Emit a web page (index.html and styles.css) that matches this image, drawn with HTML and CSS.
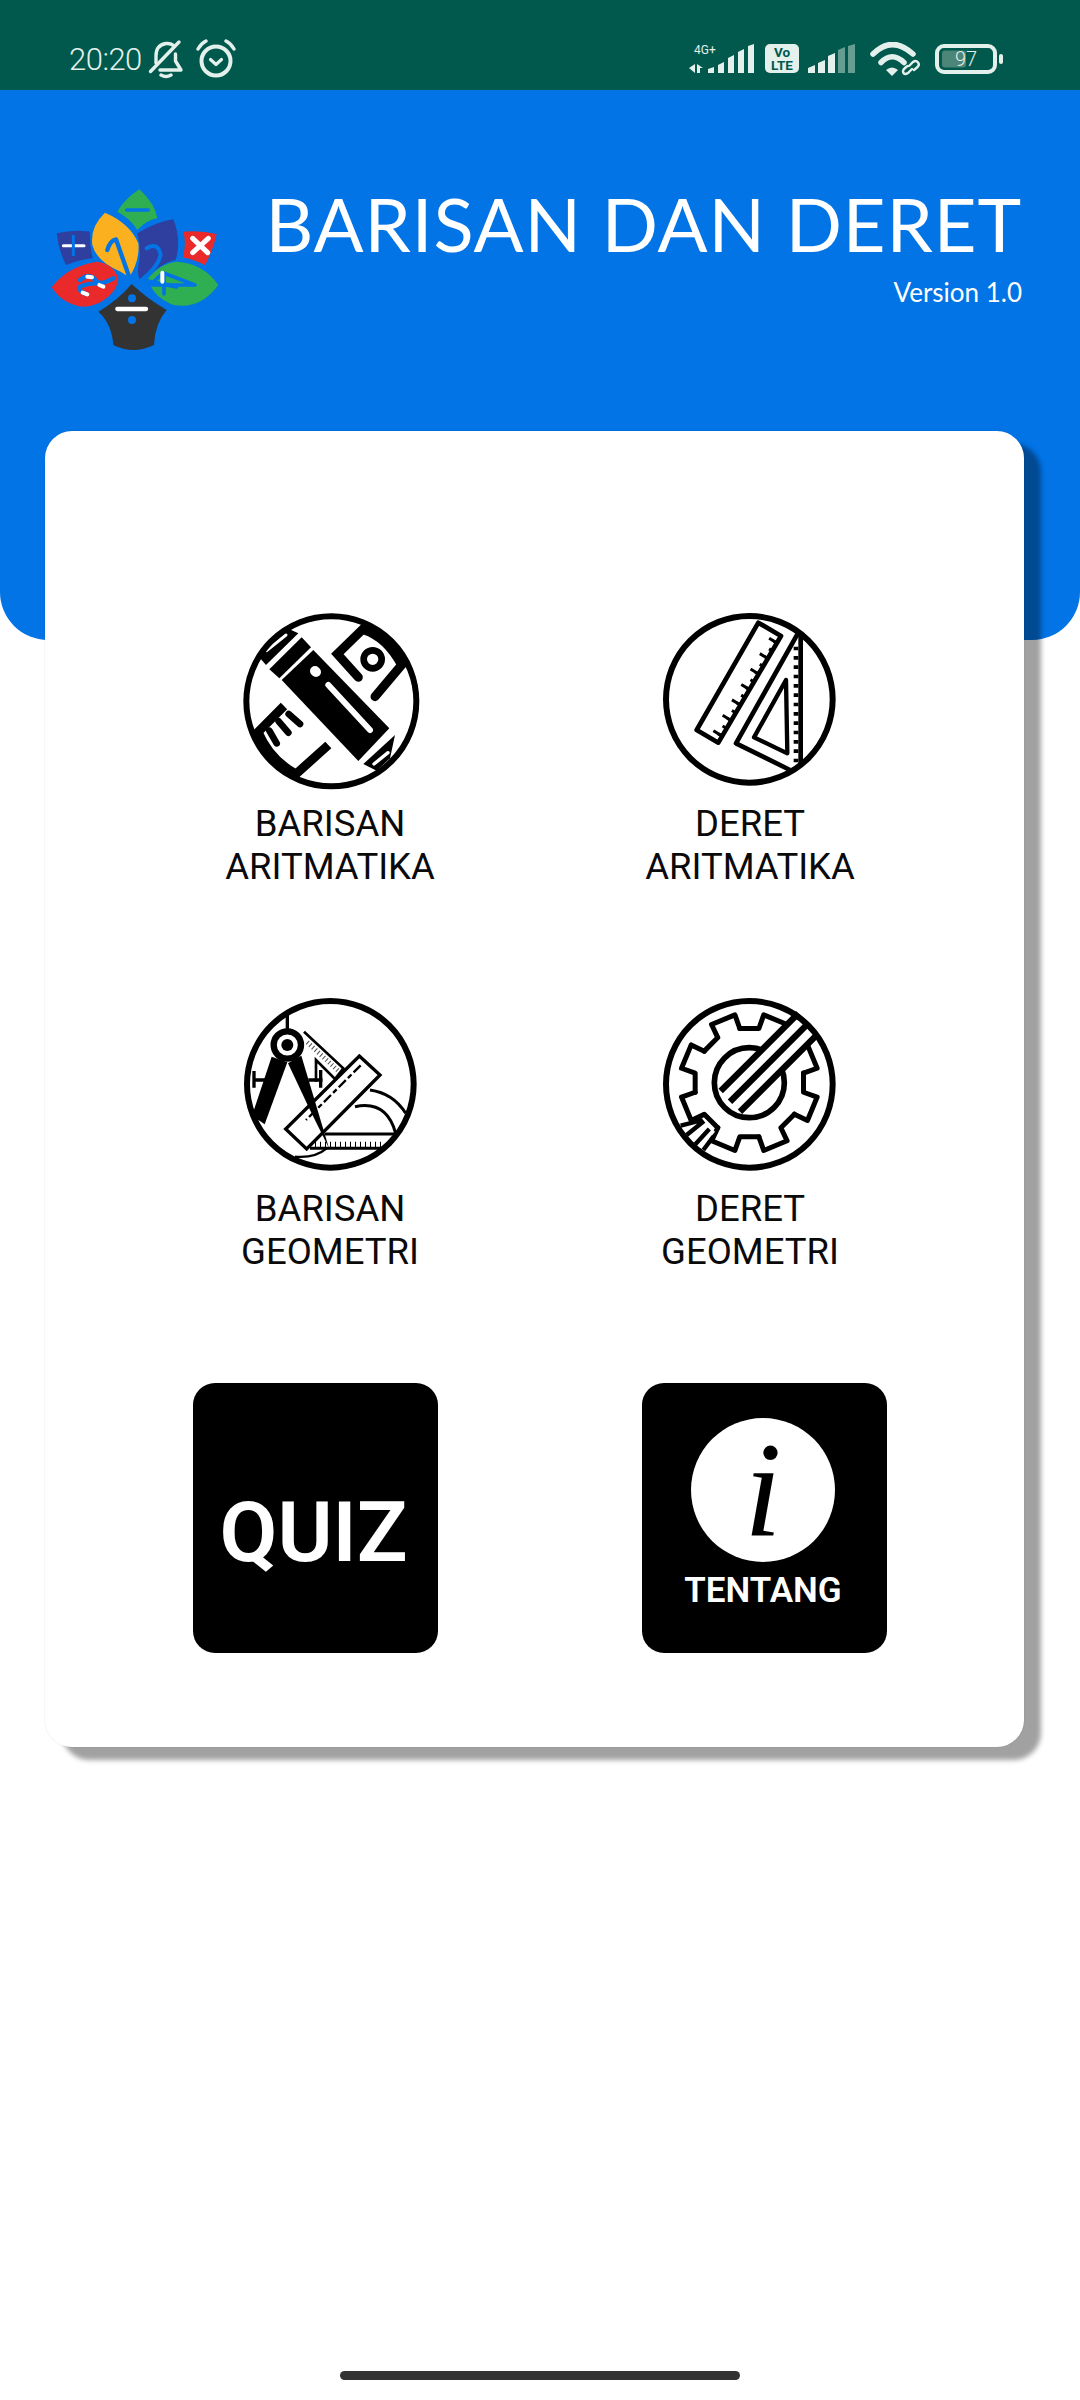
FILE: index.html
```html
<!DOCTYPE html>
<html lang="id">
<head>
<meta charset="utf-8">
<title>Barisan dan Deret</title>
<link rel="stylesheet" href="styles.css">
</head>
<body>
<div class="page">
  <div class="statusbar">
    <div class="status-left">
      <span class="time">20:20</span>
      <svg class="ic-bell" viewBox="0 0 36 40" fill="none" stroke="#e3f0ec" stroke-width="3.4" stroke-linecap="round" stroke-linejoin="round">
        <path d="M8 24V17Q8 6 18 4.500Q23 4 26 7"/><path d="M27.500 15V22L33 31H12"/><path d="M2.500 32.500L31 3"/><path d="M13 36Q18 39 23 36"/>
      </svg>
      <svg class="ic-alarm" viewBox="0 0 40 40" fill="none" stroke="#e3f0ec" stroke-linecap="round" stroke-linejoin="round">
        <circle cx="20" cy="22" r="14.500" stroke-width="4"/><path d="M14.500 20.500L20 25.500L25.500 20.500" stroke-width="3.200"/><path d="M2 10Q5 4.500 10 2M30 2Q35 4.500 38 10" stroke-width="3.400"/>
      </svg>
    </div>
    <div class="status-right">
      <svg class="ic-net" viewBox="0 0 67 34" fill="#e3f0ec">
        <text x="5" y="13" class="net-label">4G+</text>
        <path d="M0 27L6 23V32Z"/><path d="M8 23L14 27H11V32H8Z"/>
        <path d="M19 28L25 26V32H19Z"/><path d="M29 24L35 21V32H29Z"/><path d="M39 17L45 14V32H39Z"/><path d="M49 11L55 8V32H49Z"/><path d="M59 5L65 3V32H59Z"/>
      </svg>
      <svg class="ic-volte" viewBox="0 0 34 29">
        <rect width="34" height="29" rx="5" fill="#e3f0ec"/>
        <text x="17" y="13" class="volte-text">Vo</text>
        <text x="17" y="26" class="volte-text">LTE</text>
      </svg>
      <svg class="ic-signal" viewBox="0 0 48 30" fill="#e3f0ec">
        <path d="M0 24L7 21V29H0Z"/><path d="M10 19L17 16V29H10Z"/><path d="M20 12L27 9V29H20Z"/>
        <path d="M30 6L37 3V29H30Z" opacity=".45"/><path d="M40 2L47 0V29H40Z" opacity=".45"/>
      </svg>
      <svg class="ic-wifi" viewBox="0 0 50 34" fill="none" stroke="#e3f0ec" stroke-linecap="round">
        <path d="M3 12Q22 -7 43 12" stroke-width="5.500"/><path d="M11 20.500Q22 9 34 20.500" stroke-width="5.500"/>
        <path d="M16 28Q22 23 28 28L22 34Z" fill="#e3f0ec" stroke="none"/>
        <path d="M39 24L43 20Q46 18 48 20.500Q50 23 47 25.500L44 28M42 27L38 31Q35 33 33.500 31Q32 28.500 35 26L37.500 24" stroke-width="2.400"/>
      </svg>
      <svg class="ic-batt" viewBox="0 0 68 30">
        <rect x="2" y="2" width="58" height="26" rx="7" fill="none" stroke="#e3f0ec" stroke-width="4"/>
        <rect x="7" y="6.500" width="24" height="17" rx="3" fill="#4b8679"/>
        <text x="31" y="22" class="batt-text">97</text>
        <rect x="64" y="10" width="4" height="10" rx="2" fill="#e3f0ec"/>
      </svg>
    </div>
  </div>

  <header class="hero">
    <svg class="logo" viewBox="0 0 630 570">
      <path fill="#2fae52" d="M328 58Q375 100 382 145Q350 150 322 180Q300 145 262 125Q285 85 328 58Z"/>
      <path fill="#2e3f9f" d="M80 190Q130 178 180 185Q178 225 188 265Q145 270 108 285Q85 240 80 190Z"/>
      <path fill="#2e3f9f" d="M430 148Q380 155 322 190Q335 240 325 290Q320 320 335 335Q390 280 437 270Q455 210 430 148Z"/>
      <path fill="#fbb11f" d="M225 128Q180 170 187 225Q200 275 272 305L298 322Q330 270 325 220Q300 160 225 128Z"/>
      <path fill="#ea2a2a" d="M460 185Q510 180 560 192Q550 240 525 285Q490 268 458 262Q470 225 460 185Z"/>
      <path fill="#ea2a2a" d="M65 352Q110 290 200 275Q250 280 265 325Q262 370 205 400Q160 420 120 400Q85 385 65 352Z"/>
      <path fill="#2fae52" d="M565 345Q520 280 440 275Q390 280 355 325Q365 380 430 405Q510 420 565 345Z"/>
      <path fill="#333" d="M305 342Q350 385 410 420Q375 460 372 525Q310 555 250 525Q245 460 205 425Q265 390 305 342Z"/>
      <g fill="none" stroke="#0274e6" stroke-width="10" stroke-linecap="round" stroke-linejoin="round">
        <path d="M290 120H355"/>
        <path d="M232 240Q240 212 258 208L298 322" stroke-width="13"/>
        <path d="M350 235Q385 215 392 255Q385 290 335 330L440 350" stroke-width="12"/>
        <path d="M398 310L360 345H495L402 310V372" stroke-width="11"/>
        <path d="M150 330Q180 305 200 335Q215 345 250 325M200 340Q170 340 150 350Q145 365 170 372" stroke-width="13"/>
      </g>
      <g fill="none" stroke="#fff" stroke-linecap="round">
        <path d="M262 417H348" stroke-width="13"/>
        <path d="M100 227H162" stroke-width="9"/>
        <path d="M488 205L533 248M535 205L488 248" stroke-width="15"/>
        <path d="M172 320L186 322M208 345L220 350M158 368L172 373M397 308V335" stroke-width="12"/>
      </g>
      <path d="M130 195V258" fill="none" stroke="#0274e6" stroke-width="9"/>
      <g fill="#0274e6"><circle cx="306" cy="385" r="12"/><circle cx="306" cy="450" r="12"/></g>
    </svg>
    <div class="heading">
      <h1 class="title">BARISAN DAN DERET</h1>
      <p class="version">Version 1.0</p>
    </div>
  </header>

  <main class="card">
    <div class="menu">
      <a class="item">
        <svg class="topic" viewBox="0 0 600 600">
          <g fill="none" stroke="#000">
            <path d="M385 232L322 162L398 88Q470 110 515 195L435 290" stroke-width="27" stroke-linecap="round"/>
            <circle cx="428" cy="178" r="27" stroke-width="20"/>
            <path d="M162 318L84 396Q120 480 198 522L295 435" stroke-width="27"/>
            <path d="M118 392L140 430M146 364L175 398M176 342L210 372" stroke-width="20" stroke-linecap="round"/>
          </g>
          <path d="M155 240L250 150L478 385L385 483Z"/>
          <path d="M118 208L215 112L243 142L148 235Z"/>
          <path d="M88 172L172 85L205 100L108 195Z"/>
          <path d="M400 492L495 405L480 475L440 512Z"/>
          <g fill="none" stroke="#fff" stroke-linecap="round">
            <path d="M255 213L258 216" stroke-width="30"/>
            <path d="M295 255L420 390" stroke-width="18"/>
            <path d="M110 152L168 105" stroke-width="9"/>
            <path d="M432 492L474 458" stroke-width="10"/>
          </g>
          <circle cx="304" cy="304" r="255" fill="none" stroke="#000" stroke-width="18"/>
        </svg>
        <span class="label">BARISAN<br>ARITMATIKA</span>
      </a>
      <a class="item">
        <svg class="topic" viewBox="0 0 600 600">
          <g fill="none" stroke="#000" stroke-linejoin="round">
            <path d="M325 68L393 108L205 428L140 390Z" stroke-width="14"/>
            <path d="M379 123L206 410" stroke-width="13" stroke-dasharray="9 18"/>
            <path d="M370 117L197 404" stroke-width="24" stroke-dasharray="9 45"/>
            <path d="M442 103L258 430L420 510" stroke-width="14"/>
            <path d="M452 100V495" stroke-width="14"/>
            <path d="M438 140V490" stroke-width="14" stroke-dasharray="11 17"/>
            <path d="M408 240L412 460L312 412Z" stroke-width="13"/>
          </g>
          <circle cx="298" cy="298" r="250" fill="none" stroke="#000" stroke-width="18"/>
        </svg>
        <span class="label">DERET<br>ARITMATIKA</span>
      </a>
      <a class="item">
        <svg class="topic" viewBox="0 0 600 600">
          <g fill="none" stroke="#000">
            <path d="M222 140L340 250L315 282L258 225V290" stroke-width="8"/>
            <path d="M232 172L330 262" stroke-width="14" stroke-dasharray="3 8" stroke-opacity=".7"/>
            <path d="M420 315Q490 325 527 385" stroke-width="9"/>
            <path d="M375 365Q470 345 497 445" stroke-width="9"/>
            <path d="M285 447H497M240 490H465" stroke-width="9"/>
            <path d="M255 478H465" stroke-width="16" stroke-dasharray="3 12"/>
            <path d="M195 515Q255 520 290 490" stroke-width="7"/>
          </g>
          <path d="M388 213L450 270L230 492L167 432Z" fill="#fff" stroke="#000" stroke-width="10"/>
          <path d="M414 263L250 427" fill="none" stroke="#000" stroke-width="7" transform="translate(-22 -22)" stroke-dasharray="30 9 15 9"/>
          <g fill="none" stroke="#000" stroke-width="10">
            <path d="M172 85V135M68 285H130M72 258V308M235 285H278M272 255V308"/>
          </g>
          <path d="M125 215L172 232L104 418L66 392Z"/>
          <path d="M174 235L214 212L297 490L240 375Z"/>
          <circle cx="172" cy="180" r="41" fill="#fff" stroke="#000" stroke-width="19"/>
          <circle cx="172" cy="180" r="18"/>
          <circle cx="301" cy="298" r="250" fill="none" stroke="#000" stroke-width="18"/>
        </svg>
        <span class="label">BARISAN<br>GEOMETRI</span>
      </a>
      <a class="item">
        <svg class="topic" viewBox="0 0 600 600">
          <defs>
            <path id="gear-seg" d="M269.300 130.500H326.700L341.200 89.500L411.300 118.600L392.600 157.800"/>
          </defs>
          <g fill="none" stroke="#000" stroke-width="15" stroke-linejoin="round" stroke-linecap="round">
            <use href="#gear-seg"/>
            <use href="#gear-seg" transform="rotate(45 298 293)"/>
            <use href="#gear-seg" transform="rotate(90 298 293)"/>
            <use href="#gear-seg" transform="rotate(135 298 293)"/>
            <use href="#gear-seg" transform="rotate(180 298 293)"/>
            <use href="#gear-seg" transform="rotate(225 298 293)"/>
            <use href="#gear-seg" transform="rotate(270 298 293)"/>
            <use href="#gear-seg" transform="rotate(315 298 293)"/>
            <circle cx="298" cy="293" r="105" stroke-width="17"/>
          </g>
          <path d="M212 318L450 80L490 160L270 380Z" fill="#fff"/>
          <path d="M92 425L160 405L195 440L150 495Z" fill="#fff"/>
          <g fill="none" stroke="#000" stroke-width="19">
            <path d="M212 318L445 85M240 350L475 115M270 380L495 155"/>
            <path d="M92 422L158 405M110 450L162 408M136 478L178 432M160 495L190 455" stroke-width="13"/>
          </g>
          <circle cx="298" cy="298" r="250" fill="none" stroke="#000" stroke-width="18"/>
        </svg>
        <span class="label">DERET<br>GEOMETRI</span>
      </a>
    </div>
    <div class="tiles">
      <a class="tile tile-quiz"><span class="quiz">QUIZ</span></a>
      <a class="tile tile-about">
        <span class="info"><span class="info-i">i</span></span>
        <span class="about">TENTANG</span>
      </a>
    </div>
  </main>

  <div class="home-bar"></div>
</div>
</body>
</html>
```
FILE: styles.css
```css
* { box-sizing: border-box; }
html, body { margin: 0; padding: 0; background: #fff; }
a { color: inherit; text-decoration: none; }

.page {
  width: 1080px;
  height: 2400px;
  display: flex;
  flex-direction: column;
  overflow: hidden;
  font-family: Roboto, sans-serif;
}

/* status bar */
.statusbar {
  height: 90px;
  flex: none;
  background: #00594c;
  padding: 28px 77px 0 69px;
  display: flex;
  justify-content: space-between;
  align-items: center;
  color: #e3f0ec;
}
.status-left, .status-right { display: flex; align-items: center; }
.time { font-size: 31px; font-weight: 300; letter-spacing: -0.5px; width: 79px; }
.ic-bell { width: 36px; height: 40px; }
.ic-alarm { width: 40px; height: 40px; margin-left: 12px; }
.ic-net { width: 67px; height: 34px; margin-top: -2px; }
.ic-volte { width: 34px; height: 29px; margin-left: 9px; margin-top: -1px; }
.ic-signal { width: 48px; height: 30px; margin-left: 9px; margin-top: -1px; }
.ic-wifi { width: 50px; height: 34px; margin-left: 14px; margin-top: -1px; }
.ic-batt { width: 68px; height: 30px; margin-left: 15px; margin-top: -1px; }
.net-label { font: 400 12px Roboto, sans-serif; }
.volte-text { font: 700 13.500px Roboto, sans-serif; fill: #00594c; text-anchor: middle; }
.batt-text { font: 300 20px Roboto, sans-serif; fill: #e3f0ec; text-anchor: middle; }

/* blue header */
.hero {
  height: 550px;
  flex: none;
  background: #0274e6;
  border-radius: 0 0 48px 48px;
  padding: 90px 58px 0 45px;
  display: flex;
  justify-content: space-between;
  align-items: flex-start;
  color: #fff;
}
.logo { width: 210px; height: 190px; margin: -10px 0 0 -15px; }
.heading { text-align: right; }
.title {
  margin: 0;
  font: 400 74px/88px Lato, sans-serif;
  letter-spacing: 0.9px;
  white-space: nowrap;
}
.version {
  margin: 8px 0 0;
  font: 400 26px/32px Lato, sans-serif;
}

/* white card */
.card {
  flex: none;
  height: 1316px;
  margin: -209px 56px 0 45px;
  padding: 169px 64px 0 75px;
  background: #fff;
  border-radius: 27px;
  box-shadow: 17px 13px 5px rgba(0, 0, 0, .37), 0 0 2px rgba(0, 0, 0, .12);
  position: relative;
}
.menu {
  display: grid;
  grid-template-columns: 420px 420px;
  row-gap: 97px;
}
.item { display: flex; flex-direction: column; align-items: center; }
.topic { width: 200px; height: 200px; display: block; }
.label {
  padding-top: 2px;
  font-size: 36.500px;
  line-height: 43px;
  text-align: center;
  color: #0a0a0a;
}

.tiles {
  display: flex;
  gap: 204px;
  margin: 110px 0 0 73px;
}
.tile {
  width: 245px;
  height: 270px;
  background: #000;
  border-radius: 22px;
  color: #fff;
  display: flex;
  flex-direction: column;
  align-items: center;
  justify-content: center;
}
.tile-quiz { padding: 30px 4px 0 0; }
.quiz { font: 600 84px/1 Roboto, sans-serif; letter-spacing: 0; }
.tile-about { justify-content: flex-start; padding: 35px 3px 0 0; }
.info {
  width: 144px;
  height: 144px;
  border-radius: 50%;
  background: #fff;
  display: flex;
  align-items: center;
  justify-content: center;
}
.info-i {
  font: italic 400 136px/144px "Liberation Serif", serif;
  color: #000;
}
.about { margin-top: 9px; font: 600 35px/40px Roboto, sans-serif; }

.home-bar {
  width: 400px;
  height: 9px;
  border-radius: 5px;
  background: #333;
  margin: auto auto 20px 340px;
}
```
